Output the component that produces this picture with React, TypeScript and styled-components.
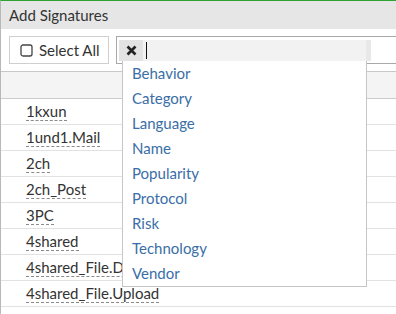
import styled, { createGlobalStyle } from "styled-components";

const GlobalStyle = createGlobalStyle`
  html, body {
    margin: 0;
    padding: 0;
    background: #ffffff;
  }
  body {
    font-family: Lato, "Open Sans", sans-serif;
    color: #333333;
    width: 396px;
    height: 314px;
    overflow: hidden;
  }
`;

const signatures = [
  "1kxun",
  "1und1.Mail",
  "2ch",
  "2ch_Post",
  "3PC",
  "4shared",
  "4shared_File.Download",
  "4shared_File.Upload",
  "",
];

const fields = [
  "Behavior",
  "Category",
  "Language",
  "Name",
  "Popularity",
  "Protocol",
  "Risk",
  "Technology",
  "Vendor",
];

const SquareIcon = () => (
  <svg width="13" height="13" viewBox="0 0 13 13">
    <rect x="1" y="1" width="11" height="11" rx="2" fill="none" stroke="#444" strokeWidth="1.3" />
  </svg>
);

const TimesIcon = () => (
  <svg width="11" height="11" viewBox="0 0 11 11">
    <path d="M1.5 1.5 L9.5 9.5 M9.5 1.5 L1.5 9.5" stroke="#222" strokeWidth="2.6" strokeLinecap="butt" />
  </svg>
);

export default function App() {
  return (
    <>
      <GlobalStyle />
      <Dialog>
        <Title>Add Signatures</Title>
        <Toolbar>
          <SelectAll>
            <SquareIcon />
            <span>Select All</span>
          </SelectAll>
          <SearchBox>
            <TagArea>
              <ClearTag>
                <TimesIcon />
              </ClearTag>
              <SearchInput>
                <Caret />
              </SearchInput>
              <Gutter />
            </TagArea>
            <Menu>
              {fields.map((f) => (
                <MenuItem key={f}>{f}</MenuItem>
              ))}
            </Menu>
          </SearchBox>
        </Toolbar>
        <TableHead />
        <Rows>
          {signatures.map((s, i) => (
            <Row key={i}>{s && <Name>{s}</Name>}</Row>
          ))}
        </Rows>
      </Dialog>
    </>
  );
}

const Dialog = styled.div`
  width: 396px;
  height: 314px;
  box-sizing: border-box;
  border-top: 1px solid #2ea332;
  border-left: 1px solid #b8b8b8;
  overflow: hidden;
`;

const Title = styled.div`
  height: 28px;
  background: #e6e6e6;
  padding-left: 8px;
  font-size: 15px;
  line-height: 29px;
  color: #333;
`;

const Toolbar = styled.div`
  display: flex;
  align-items: flex-start;
  height: 42px;
  box-sizing: border-box;
  padding: 7px 0 0 8px;
  gap: 7px;
`;

const SelectAll = styled.div`
  display: flex;
  align-items: center;
  gap: 6px;
  width: 100px;
  height: 28px;
  box-sizing: border-box;
  border: 1px solid #cfcfcf;
  padding-left: 10px;
  font-size: 15px;
  color: #333;
  flex-shrink: 0;
`;

const SearchBox = styled.div`
  position: relative;
  flex: 1;
  height: 28px;
  box-sizing: border-box;
  border: 1px solid #a9a9a9;
  border-right: none;
  padding: 3px 0 0 2px;
`;

const TagArea = styled.div`
  display: flex;
  width: 252px;
  height: 21px;
`;

const ClearTag = styled.div`
  display: flex;
  align-items: center;
  justify-content: center;
  width: 24px;
  background: #e3e3e3;
`;

const SearchInput = styled.div`
  flex: 1;
  background: #f2f2f2;
  padding-left: 3px;
  display: flex;
  align-items: center;
`;

const Caret = styled.div`
  width: 1px;
  height: 17px;
  background: #111;
`;

const Gutter = styled.div`
  width: 5px;
  background: #e8e8e8;
`;

const Menu = styled.div`
  position: absolute;
  left: 5px;
  top: 24px;
  width: 245px;
  box-sizing: border-box;
  background: #fff;
  border: 1px solid #c6c6c6;
  border-top: none;
  z-index: 2;
`;

const MenuItem = styled.div`
  height: 25px;
  line-height: 25px;
  padding-left: 9px;
  font-size: 15px;
  color: #3a6ea6;
`;

const TableHead = styled.div`
  height: 26px;
  background: #f4f4f4;
  border-top: 1px solid #c8c8c8;
  border-bottom: 1px solid #cccccc;
`;

const Rows = styled.div`
  display: flex;
  flex-direction: column;
`;

const Row = styled.div`
  height: 25px;
  border-bottom: 1px solid #e2e2e2;
  padding-left: 25px;
  display: flex;
  align-items: center;
`;

const Name = styled.span`
  font-size: 15px;
  line-height: 17px;
  color: #333;
  border-bottom: 1px dashed #8a8a8a;
`;
